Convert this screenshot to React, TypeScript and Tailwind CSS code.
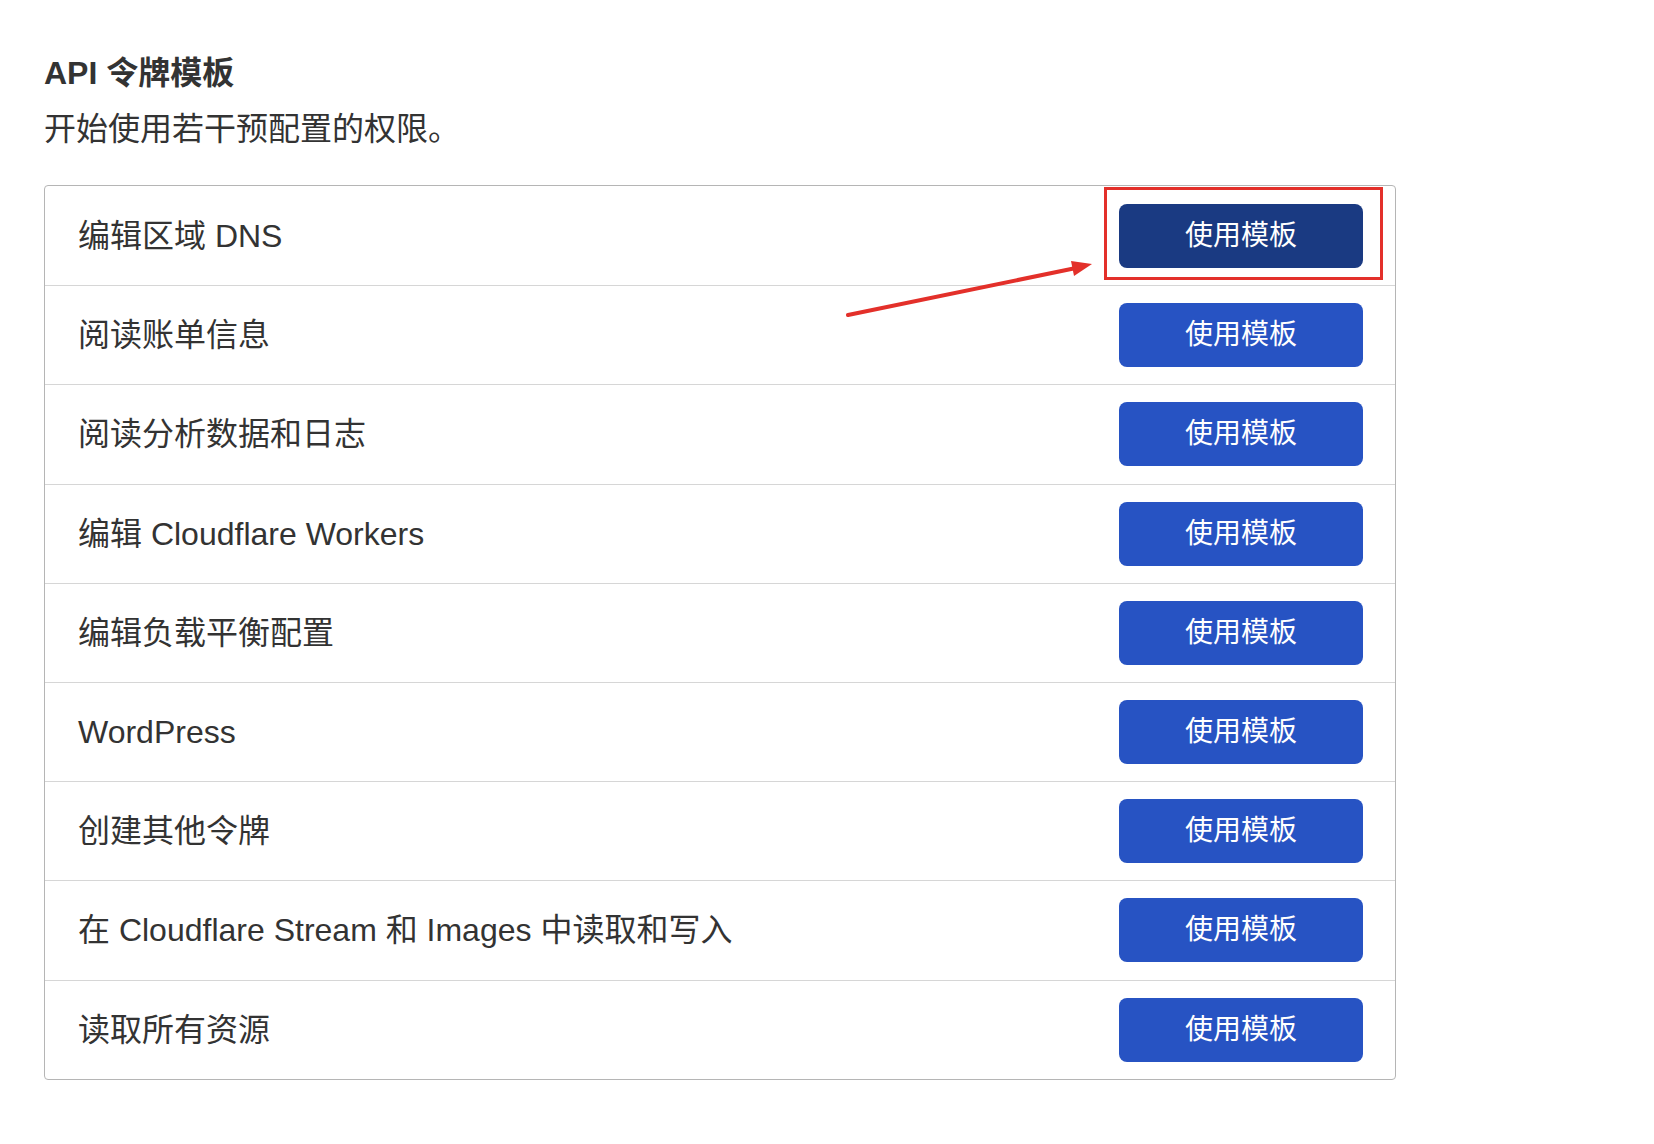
import React from "react"

const rows = [
    "编辑区域 DNS",
    "阅读账单信息",
    "阅读分析数据和日志",
    "编辑 Cloudflare Workers",
    "编辑负载平衡配置",
    "WordPress",
    "创建其他令牌",
    "在 Cloudflare Stream 和 Images 中读取和写入",
    "读取所有资源",
]

const font = { fontFamily: '"Liberation Sans", "Noto Sans CJK SC", sans-serif' }

export default function App() {
    return (
        <div className="relative min-h-screen bg-white text-[#333333]" style={font}>
            <div className="pl-[44px] pt-[53px] pb-[60px]">
                <h1 className="text-[32px] leading-[40px] font-bold">API 令牌模板</h1>
                <p className="mt-[16px] text-[32px] leading-[40px]">开始使用若干预配置的权限。</p>

                <div className="mt-[36px] w-[1352px] border border-[#b5b5b5] rounded-[4px] bg-white">
                    {rows.map((name, i) => (
                        <div
                            key={name}
                            className={
                                i === 0
                                    ? "flex items-center justify-between h-[99.2px] pl-[33px] pr-[32px]"
                                    : "flex items-center justify-between h-[99.2px] pl-[33px] pr-[32px] border-t border-[#d6d6d6]"
                            }
                        >
                            <span className="text-[32px] leading-[40px]">{name}</span>
                            <button
                                className={
                                    i === 0
                                        ? "w-[244px] h-[64px] rounded-[8px] bg-[#1a3a82] text-white text-[28px]"
                                        : "w-[244px] h-[64px] rounded-[8px] bg-[#2753c3] text-white text-[28px]"
                                }
                            >
                                使用模板
                            </button>
                        </div>
                    ))}
                </div>
            </div>

            {/* red highlight + arrow */}
            <div className="absolute left-[1104px] top-[187px] w-[279px] h-[93px] border-[3px] border-[#e3302a] pointer-events-none" />
            <svg className="absolute left-0 top-0 pointer-events-none" width="1654" height="1144">
                <line x1="848" y1="315" x2="1076" y2="268" stroke="#e3302a" strokeWidth="4" strokeLinecap="round" />
                <polygon points="1092,264 1071,261 1074,276" fill="#e3302a" />
            </svg>
        </div>
    )
}
